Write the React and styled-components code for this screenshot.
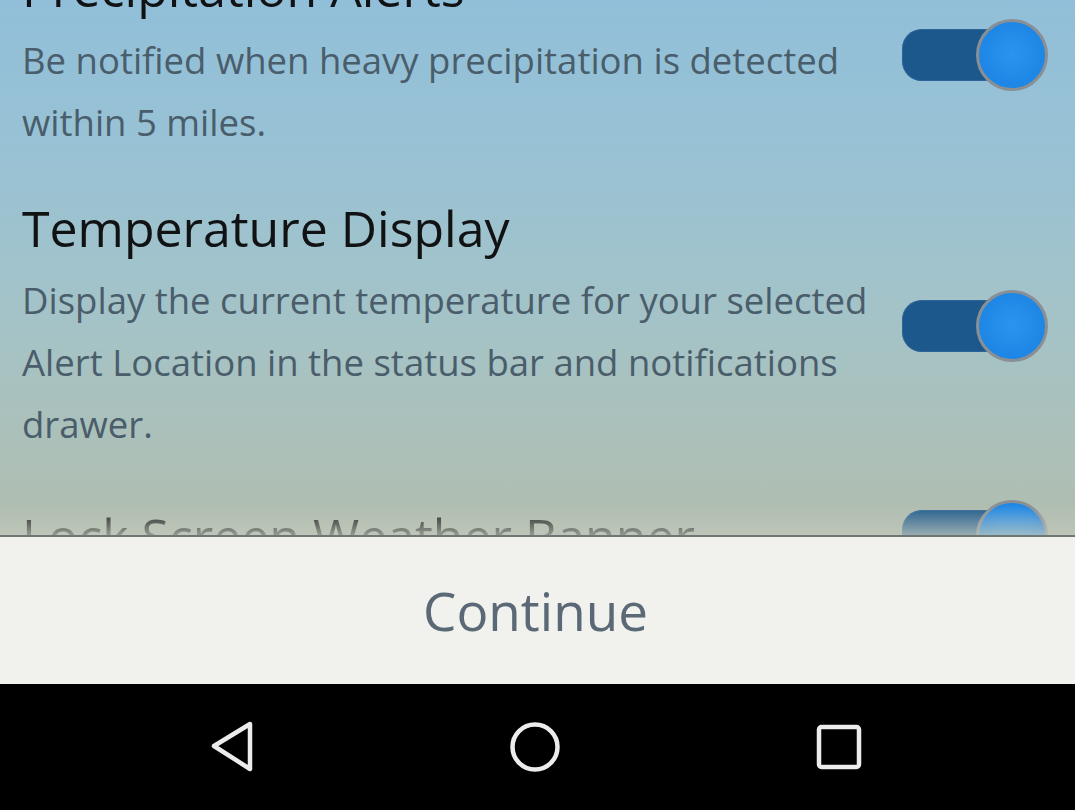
import React from "react";
import styled, { createGlobalStyle } from "styled-components";

const GlobalStyle = createGlobalStyle`
	html, body {
		margin: 0;
		padding: 0;
		height: 100%;
		overflow: hidden;
		background: #000;
	}
	body {
		font-family: "Open Sans", "Liberation Sans", sans-serif;
	}
`;

const settings = [
	{
		title: "Precipitation Alerts",
		description:
			"Be notified when heavy precipitation is detected within 5 miles.",
	},
	{
		title: "Temperature Display",
		description:
			"Display the current temperature for your selected Alert Location in the status bar and notifications drawer.",
	},
	{
		title: "Lock Screen Weather Banner",
	},
];

export default function App() {
	return (
		<>
			<GlobalStyle />
			<Screen>
				<Scroller>
					<List>
						{settings.map((item) => (
							<Setting key={item.title}>
								<SettingText>
									<Title>{item.title}</Title>
									{item.description && (
										<Description>{item.description}</Description>
									)}
								</SettingText>
								<Toggle>
									<Track />
									<Knob />
								</Toggle>
							</Setting>
						))}
					</List>
					<Fade />
				</Scroller>
				<Footer>
					<ContinueButton>Continue</ContinueButton>
				</Footer>
				<NavBar>
					<NavButton aria-label="Back">
						<svg width="48" height="52" viewBox="0 0 48 52">
							<path
								d="M42 3 L6 25 L42 48 Z"
								fill="none"
								stroke="#ececec"
								strokeWidth="4.5"
								strokeLinejoin="round"
							/>
						</svg>
					</NavButton>
					<NavButton aria-label="Home">
						<svg width="52" height="52" viewBox="0 0 52 52">
							<circle
								cx="26"
								cy="26"
								r="22.5"
								fill="none"
								stroke="#ececec"
								strokeWidth="4.5"
							/>
						</svg>
					</NavButton>
					<NavButton aria-label="Recents">
						<svg width="48" height="48" viewBox="0 0 48 48">
							<rect
								x="4"
								y="4"
								width="40"
								height="40"
								rx="2.5"
								fill="none"
								stroke="#ececec"
								strokeWidth="4.5"
							/>
						</svg>
					</NavButton>
				</NavBar>
			</Screen>
		</>
	);
}

const Screen = styled.div`
	width: 1075px;
	height: 810px;
	display: flex;
	flex-direction: column;
	overflow: hidden;
`;

const Scroller = styled.div`
	position: relative;
	height: 535px;
	flex-shrink: 0;
	overflow: hidden;
	background: linear-gradient(
		180deg,
		#91bfd9 0%,
		#99c2d4 30%,
		#a5c3c6 62%,
		#b1bdae 100%
	);
`;

const List = styled.div`
	display: flex;
	flex-direction: column;
	margin-top: -65px;
`;

const Setting = styled.div`
	display: flex;
	align-items: center;
	padding: 22px 27px 22px 22px;
`;

const SettingText = styled.div`
	flex: 1;
	display: flex;
	flex-direction: column;
	gap: 10px;
	padding-right: 6px;
`;

const Title = styled.h2`
	margin: 0;
	color: #111213;
	font-family: "Open Sans", sans-serif;
	font-weight: 400;
	font-size: 50px;
	line-height: 62px;
	white-space: nowrap;
`;

const Description = styled.p`
	margin: 0;
	color: #4a5d6b;
	font-family: "Open Sans", sans-serif;
	font-weight: 400;
	font-size: 36.5px;
	line-height: 62px;
`;

const Toggle = styled.div`
	position: relative;
	width: 146px;
	height: 74px;
	flex-shrink: 0;
	display: flex;
	align-items: center;
`;

const Track = styled.span`
	display: block;
	width: 118px;
	height: 52px;
	border-radius: 20px;
	background: #1c588b;
	box-shadow: inset 0 0 0 1px rgba(60, 110, 170, 0.5);
`;

const Knob = styled.span`
	position: absolute;
	right: 0;
	top: 1px;
	width: 66px;
	height: 66px;
	border-radius: 50%;
	border: 3px solid #8a8f94;
	background: radial-gradient(circle at 50% 48%, #2c93ef 0%, #1f88e6 60%, #1c82e0 100%);
`;

const Fade = styled.div`
	position: absolute;
	left: 0;
	right: 0;
	bottom: 0;
	height: 30px;
	background: linear-gradient(
		180deg,
		rgba(177, 189, 174, 0) 0%,
		rgba(192, 200, 188, 0.75) 100%
	);
	pointer-events: none;
`;

const Footer = styled.div`
	height: 147px;
	flex-shrink: 0;
	display: flex;
	align-items: center;
	justify-content: center;
	background: #f1f1ed;
	border-top: 2px solid #6f7774;
`;

const ContinueButton = styled.button`
	border: none;
	background: none;
	padding: 0;
	margin-left: -4px;
	color: #5a6975;
	font-family: "Open Sans", sans-serif;
	font-weight: 400;
	font-size: 53px;
	line-height: 1;
	cursor: pointer;
`;

const NavBar = styled.nav`
	flex: 1;
	background: #000;
	display: grid;
	grid-template-columns: repeat(3, 1fr);
	align-items: center;
	padding: 0 84px 0 80px;
`;

const NavButton = styled.div`
	display: flex;
	align-items: center;
	justify-content: center;
	height: 100%;
`;
